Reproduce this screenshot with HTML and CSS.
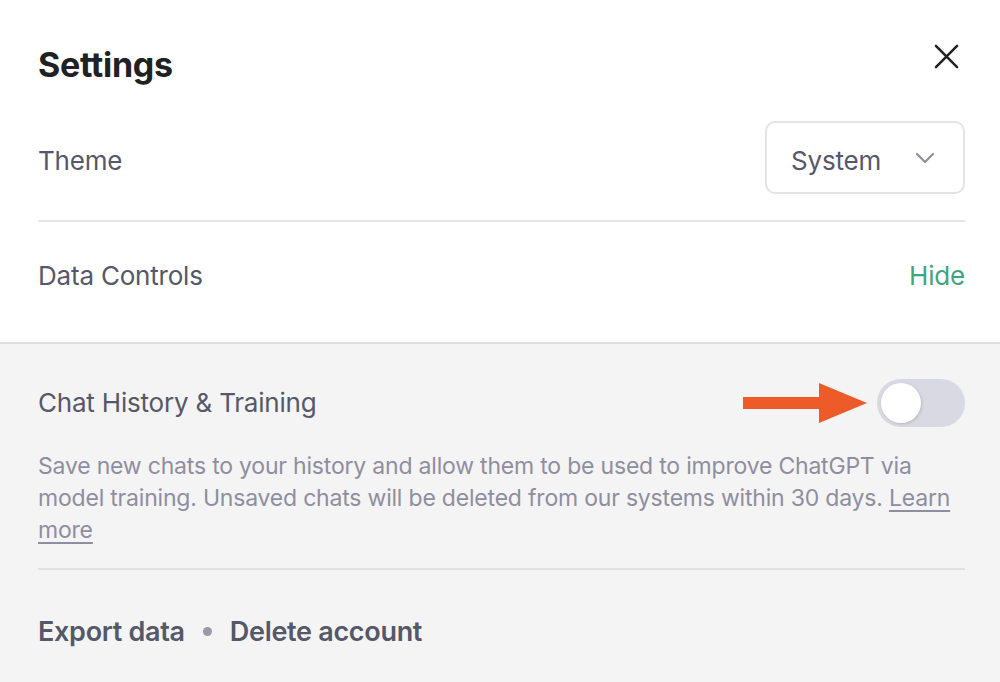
FILE: index.html
```html
<!DOCTYPE html>
<html>
<head>
<meta charset="utf-8">
<link rel="stylesheet" href="styles.css">
</head>
<body>
<div class="dialog">
  <div class="top">
    <div class="header">
      <h1 class="title">Settings</h1>
      <button class="close" aria-label="Close">
        <svg width="26" height="26" viewBox="0 0 26 26"><path d="M2 2 L24 24 M24 2 L2 24" stroke="#202123" stroke-width="2.6" stroke-linecap="round" fill="none"/></svg>
      </button>
    </div>
    <div class="row theme-row">
      <span class="label shift">Theme</span>
      <div class="select">
        <span class="shift">System</span>
        <svg width="20" height="12" viewBox="0 0 20 12"><path d="M2 2 L10 10 L18 2" stroke="#8e8ea0" stroke-width="2.2" fill="none" stroke-linecap="round" stroke-linejoin="round"/></svg>
      </div>
    </div>
    <div class="row dc-row">
      <span class="label">Data Controls</span>
      <span class="hide">Hide</span>
    </div>
  </div>
  <div class="bottom">
    <div class="toggle-row">
      <span class="label">Chat History &amp; Training</span>
      <div class="toggle-wrap">
        <svg class="arrow" width="124" height="40" viewBox="0 0 124 40"><path d="M0 14 H76 V0 L124 20 L76 40 V26 H0 Z" fill="#ec5b28"/></svg>
        <div class="switch"><div class="knob"></div></div>
      </div>
    </div>
    <p class="desc">Save new chats to your history and allow them to be used to improve ChatGPT via model training. Unsaved chats will be deleted from our systems within 30 days. <a href="#">Learn more</a></p>
    <div class="links">
      <span>Export data</span>
      <span class="dot"></span>
      <span>Delete account</span>
    </div>
  </div>
</div>
</body>
</html>
```

FILE: styles.css
```css
* { box-sizing: border-box; }
html, body { margin: 0; padding: 0; background: #fff; }
body {
  font-family: Inter, "Liberation Sans", sans-serif;
  width: 1000px;
  height: 682px;
  overflow: hidden;
}
.dialog { display: flex; flex-direction: column; height: 682px; }
.top { padding: 0 35px 0 38px; background: #fff; }
.header {
  display: flex;
  justify-content: space-between;
  align-items: center;
  height: 128px;
}
.title {
  margin: 0;
  font-size: 34px;
  font-weight: 700;
  color: #202123;
  letter-spacing: -0.3px;
}
.close {
  border: 0;
  background: none;
  padding: 0;
  margin-right: 6px;
  display: flex;
  margin-top: -16px;
}
.close svg { width: 25px; height: 25px; }
.row {
  display: flex;
  justify-content: space-between;
  align-items: center;
}
.label { font-size: 26px; color: #565869; letter-spacing: -0.2px; }
.shift { padding-top: 5px; }
.theme-row {
  margin-top: -7px;
  padding-bottom: 26px;
  border-bottom: 2px solid #e5e5e5;
}
.select {
  width: 200px;
  height: 73px;
  border: 2px solid #e3e3e8;
  border-radius: 10px;
  display: flex;
  align-items: center;
  justify-content: space-between;
  padding: 0 28px 0 24px;
  font-size: 26px;
  color: #565869;
  letter-spacing: -0.2px;
}
.dc-row { height: 120px; padding-bottom: 13px; }
.hide { font-size: 26px; color: #3fa57d; letter-spacing: -0.2px; }
.bottom {
  flex: 1;
  background: #f4f4f4;
  border-top: 2px solid #dedede;
  padding: 0 35px 0 38px;
}
.toggle-row {
  display: flex;
  justify-content: space-between;
  align-items: center;
  height: 117px;
}
.toggle-wrap { display: flex; align-items: center; gap: 10px; }
.arrow { display: block; }
.switch {
  width: 88px;
  height: 48px;
  border-radius: 24px;
  background: #d9d9e3;
  padding: 4px;
}
.knob {
  width: 40px;
  height: 40px;
  border-radius: 50%;
  background: #fff;
  box-shadow: 1px 1px 3px rgba(0,0,0,0.15);
}
.desc {
  margin: -11px 0 0;
  font-size: 23px;
  line-height: 32px;
  color: #8e8ea0;
  letter-spacing: -0.2px;
  padding-bottom: 22px;
  border-bottom: 2px solid #e1e1e1;
}
.desc a { color: #8e8ea0; text-decoration: underline; text-underline-offset: 4px; }
.links {
  display: flex;
  align-items: center;
  height: 122px;
  font-size: 27px;
  font-weight: 600;
  color: #565869;
  gap: 18px;
  letter-spacing: -0.3px;
}
.dot {
  width: 9px;
  height: 9px;
  border-radius: 50%;
  background: #9a9aa8;
}
```
